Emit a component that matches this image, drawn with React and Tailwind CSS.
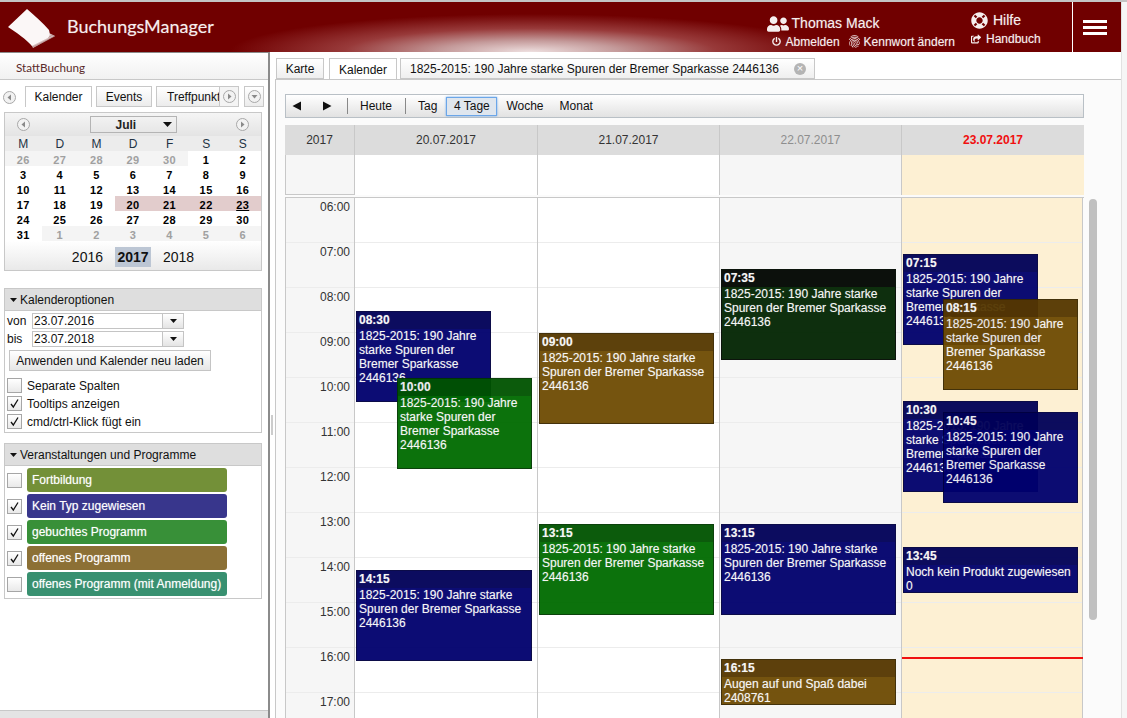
import React from 'react';
import { FaUserFriends, FaLifeRing, FaPowerOff, FaShareSquare } from 'react-icons/fa';
import { MdFingerprint } from 'react-icons/md';

const hours = ['06:00', '07:00', '08:00', '09:00', '10:00', '11:00', '12:00', '13:00', '14:00', '15:00', '16:00', '17:00'];

const calRows = [
    [[26, 1], [27, 1], [28, 1], [29, 1], [30, 1], [1], [2]],
    [[3], [4], [5], [6], [7], [8], [9]],
    [[10], [11], [12], [13], [14], [15], [16]],
    [[17], [18], [19], [20, 2], [21, 2], [22, 2], [23, 3]],
    [[24], [25], [26], [27], [28], [29], [30]],
    [[31], [1, 1], [2, 1], [3, 1], [4, 1], [5, 1], [6, 1]],
];

const SPAREN = '1825-2015: 190 Jahre starke Spuren der Bremer Sparkasse 2446136';

// events are slightly see-through, so the base colours are a bit darker than they look
const navy = { head: 'bg-[#000057]', body: 'bg-[#00006d]', border: 'border-[#000040]' };
const green = { head: 'bg-[#005300]', body: 'bg-[#006b00]', border: 'border-[#003800]' };
const brown = { head: 'bg-[#553700]', body: 'bg-[#6e4b03]', border: 'border-[#3a2800]' };
const dark = { head: 'bg-[#000400]', body: 'bg-[#022502]', border: 'border-[#000800]' };

const Arrow = ({ dir = 'left' }) => (
    <span className="flex h-[13px] w-[13px] items-center justify-center rounded-full border border-[#a8a8a8] bg-[#f2f2f2]">
        <svg width="7" height="7" viewBox="0 0 7 7">
            {dir === 'left' && <path d="M5 0.5V6.5L1.5 3.5Z" fill="#8a8a8a" />}
            {dir === 'right' && <path d="M2 0.5V6.5L5.5 3.5Z" fill="#8a8a8a" />}
            {dir === 'down' && <path d="M0.5 2H6.5L3.5 5.5Z" fill="#8a8a8a" />}
        </svg>
    </span>
);

const Caret = () => (
    <svg width="9" height="5" viewBox="0 0 9 5"><path d="M0 0H9L4.5 5Z" fill="#111" /></svg>
);

const SmallCaret = () => (
    <svg width="7" height="4" viewBox="0 0 7 4"><path d="M0 0H7L3.5 4Z" fill="#111" /></svg>
);

const Check = ({ checked }) => (
    <span className="flex h-[15px] w-[15px] shrink-0 items-center justify-center border border-[#a6a6a6] bg-gradient-to-b from-white to-[#e9e9e9]">
        {checked && (
            <svg width="11" height="11" viewBox="0 0 11 11">
                <path d="M2 6L4.3 9L9 1.5" fill="none" stroke="#111" strokeWidth="1.3" />
            </svg>
        )}
    </span>
);

const DateField = ({ label, value }) => (
    <div className="flex h-[16px] items-center">
        <span className="w-[27px] pl-[2px] text-[12px]">{label}</span>
        <div className="flex h-[16px] w-[152px] items-center border border-[#c4c4c4] bg-white">
            <span className="flex-1 pl-[1px] text-[12px] leading-none">{value}</span>
            <span className="flex h-full w-[21px] items-center justify-center border-l border-[#c4c4c4] bg-gradient-to-b from-white to-[#e4e4e4]">
                <SmallCaret />
            </span>
        </div>
    </div>
);

const Legend = ({ checked, color, label }) => (
    <div className="flex h-[24px] items-center">
        <div className="flex w-[22px] pl-[2px]"><Check checked={checked} /></div>
        <div className={`flex h-[24px] w-[200px] items-center whitespace-nowrap rounded-[3px] pl-[5px] text-[12px] text-white [text-shadow:0_0_1px_rgba(255,255,255,0.5)] ${color}`}>
            {label}
        </div>
    </div>
);

const SideTab = ({ active, children, className }) => (
    <div className={`flex h-[21px] items-center justify-center overflow-hidden border border-[#c8c8c8] text-[12px] ${active ? 'border-b-0 bg-white' : 'bg-gradient-to-b from-white to-[#ececec]'} ${className}`}>
        {children}
    </div>
);

const Sidebar = () => (
    <aside className="flex h-full w-[270px] shrink-0 flex-col border-r-2 border-t border-[#8b8b8b] bg-white">
        <div className="h-[27px] shrink-0 border-b border-[#c8c8c8] bg-gradient-to-b from-white to-[#f1f1f1] pl-[16px] pt-[7px] font-['Lato',sans-serif] text-[11.7px] leading-[14px] text-[#5b2a2a]">
            StattBuchung
        </div>
        <div className="flex h-[27px] shrink-0 items-end pl-[2px]">
            <div className="mb-[3px] flex w-[14px] justify-center"><Arrow /></div>
            <SideTab active className="ml-[9px] w-[67px]">Kalender</SideTab>
            <SideTab className="ml-[4px] w-[56px]">Events</SideTab>
            <SideTab className="ml-[4px] w-[83px] justify-start pl-[10px]"><span className="whitespace-nowrap">Treffpunkt</span></SideTab>
            <div className="ml-[-20px] flex h-[21px] w-[19px] items-center justify-center border-y border-l border-[#c8c8c8] bg-[#f4f4f4]"><Arrow dir="right" /></div>
            <div className="ml-[6px] flex h-[21px] w-[20px] items-center justify-center border border-[#c8c8c8] bg-gradient-to-b from-white to-[#ececec]"><Arrow dir="down" /></div>
        </div>

        <div className="mx-[4px] mt-[5px] w-[258px] border border-[#c8c8c8]">
            <div className="flex h-[23px] items-center justify-between bg-gradient-to-b from-[#f5f5f5] to-[#e4e4e4] px-[12px]">
                <Arrow />
                <div className="flex h-[17px] w-[87px] items-center gap-[27px] border border-[#b4b4b4] pl-[25px] text-[12px] font-bold text-[#222]">
                    Juli <Caret />
                </div>
                <Arrow dir="right" />
            </div>
            <div className="grid h-[15px] grid-cols-7 bg-[#ececec] text-center text-[12px] leading-[16px] text-[#234]">
                {['M', 'D', 'M', 'D', 'F', 'S', 'S'].map((d, i) => <span key={i}>{d}</span>)}
            </div>
            {calRows.map((row, r) => (
                <div key={r} className="grid h-[15px] grid-cols-7 text-center text-[11px] font-bold tracking-[0.4px]">
                    {row.map(([n, kind], i) => (
                        <span
                            key={i}
                            className={`h-[15px] pt-[3px] leading-[13px] ${
                                kind === 1 ? 'bg-[#f4f4f4] text-[#a0a0a0]'
                                : kind === 2 ? 'bg-[#e2cccc] text-black'
                                : kind === 3 ? 'bg-[#e2cccc] text-black underline'
                                : 'text-black'
                            }`}
                        >
                            {n}
                        </span>
                    ))}
                </div>
            ))}
            <div className="flex h-[29px] items-center justify-center bg-gradient-to-b from-white to-[#e9e9e9] pt-[3px] text-[14px]">
                <span>2016</span>
                <span className="mx-[12px] flex h-[20px] w-[36px] items-center justify-center bg-[#bcc6d4] pt-[1px] font-bold">2017</span>
                <span>2018</span>
            </div>
        </div>

        <div className="mx-[4px] mt-[17px] w-[258px] border border-[#c8c8c8]">
            <div className="flex h-[22px] items-center gap-[3px] border-b border-[#c8c8c8] bg-[#dedede] pl-[5px] text-[12px]">
                <SmallCaret />
                Kalenderoptionen
            </div>
            <div className="flex flex-col gap-[2px] pt-[2px]">
                <DateField label="von" value="23.07.2016" />
                <DateField label="bis" value="23.07.2018" />
            </div>
            <div className="ml-[4px] mt-[3px] flex h-[21px] w-[202px] items-center justify-center border border-[#c4c4c4] bg-gradient-to-b from-white to-[#e6e6e6] text-[12px]">
                Anwenden und Kalender neu laden
            </div>
            <div className="flex flex-col gap-[3px] pb-[3px] pl-[2px] pt-[7px] text-[12px]">
                <label className="flex h-[15px] items-center gap-[5px]"><Check />Separate Spalten</label>
                <label className="flex h-[15px] items-center gap-[5px]"><Check checked />Tooltips anzeigen</label>
                <label className="flex h-[15px] items-center gap-[5px]"><Check checked />cmd/ctrl-Klick fügt ein</label>
            </div>
        </div>

        <div className="mx-[4px] mt-[10px] w-[258px] border border-[#c8c8c8]">
            <div className="flex h-[22px] items-center gap-[3px] border-b border-[#c8c8c8] bg-[#dedede] pl-[5px] text-[12px]">
                <SmallCaret />
                Veranstaltungen und Programme
            </div>
            <div className="flex flex-col gap-[2px] py-[2px]">
                <Legend color="bg-[#739038]" label="Fortbildung" />
                <Legend checked color="bg-[#38368c]" label="Kein Typ zugewiesen" />
                <Legend checked color="bg-[#389038]" label="gebuchtes Programm" />
                <Legend checked color="bg-[#8c7035]" label="offenes Programm" />
                <Legend color="bg-[#389070]" label="offenes Programm (mit Anmeldung)" />
            </div>
        </div>

        <div className="flex-1" />
        <div className="h-[8px] shrink-0 border-t border-[#c8c8c8] bg-[#e4e4e4]" />
    </aside>
);

const Logo = () => (
    <svg width="50" height="42" viewBox="0 0 50 42">
        <path d="M43 27L49 30L27 42L25 38Z" fill="#d9c2c2" />
        <path d="M27 41L49 30M26 39.5L47 29" stroke="#a87a7a" strokeWidth="0.6" fill="none" />
        <path d="M2 21L21 3C29 10 37 17 43 24C44 27 44 30 42 32L26 40C20 33 11 27 2 21Z" fill="#fbf7f7" />
    </svg>
);

const Header = () => (
    <header className="flex h-[50px] shrink-0 bg-[#700000] bg-[radial-gradient(ellipse_300px_38px_at_530px_100%,#eee0e0,#c49a9a_30%,#983a3a_62%,#700000_100%)] text-[#f6eeee] [text-shadow:0_0_1px_rgba(255,255,255,0.4)]">
        <div className="flex w-[66px] items-center pl-[6px]">
            <Logo />
        </div>
        <div className="ml-[1px] pt-[12px] font-['Lato',sans-serif] text-[18px] leading-[24px]">BuchungsManager</div>
        <div className="flex-1" />
        <div className="mr-[16px] flex flex-col items-start pt-[12px]">
            <div className="flex h-[19px] items-center gap-[3px] text-[14px]">
                <FaUserFriends className="text-[22px]" /><span>Thomas Mack</span>
            </div>
            <div className="flex h-[17px] items-center pl-[5px] text-[12px]">
                <FaPowerOff className="mr-[5px] text-[9px]" />Abmelden
                <MdFingerprint className="ml-[7px] mr-[2px] text-[15px]" />Kennwort ändern
            </div>
        </div>
        <div className="flex w-[102px] flex-col items-start border-r border-white pt-[9px]">
            <div className="flex h-[19px] items-center gap-[5px] text-[14px]">
                <FaLifeRing className="text-[17px]" />Hilfe
            </div>
            <div className="flex h-[18px] items-center gap-[5px] text-[12px]">
                <FaShareSquare className="text-[10px]" />Handbuch
            </div>
        </div>
        <div className="flex w-[48px] flex-col justify-center gap-[3px] pl-[10px]">
            <span className="h-[3px] w-[24px] bg-white" />
            <span className="h-[3px] w-[24px] bg-white" />
            <span className="h-[3px] w-[24px] bg-white" />
        </div>
    </header>
);

const Event = ({ x, top, w, h, time, text, tone }) => (
    <div className={`absolute overflow-hidden border text-[12px] leading-[14px] text-[#f6f6f6] opacity-95 [text-shadow:0_0_1px_rgba(255,255,255,0.4)] ${tone.body} ${tone.border}`} style={{ left: x, top, width: w, height: h }}>
        <div className={`h-[17px] pl-[2px] pt-[1px] font-bold ${tone.head}`}>{time}</div>
        <div className="pl-[2px]">{text}</div>
    </div>
);

const ToolBtn = ({ children, className = '' }) => (
    <span className={`flex items-center text-[12px] ${className}`}>{children}</span>
);

const dayCols = [
    { w: 'w-[183px]', bg: 'bg-white' },
    { w: 'w-[182px]', bg: 'bg-white' },
    { w: 'w-[182px]', bg: 'bg-[#f6f6f6]' },
    { w: 'w-[181px]', bg: 'bg-[#fdf0d3]' },
];

const Main = () => (
    <main className="flex min-w-0 flex-1 flex-col">
        <div className="flex h-[27px] shrink-0 items-end pl-[1px] text-[12px]">
            <div className="flex h-[21px] w-[48px] items-center justify-center border border-[#c8c8c8] bg-gradient-to-b from-white to-[#efefef]">Karte</div>
            <div className="ml-[5px] flex h-[22px] w-[68px] translate-y-[1px] items-center justify-center border border-b-0 border-[#c8c8c8] bg-white">Kalender</div>
            <div className="ml-[3px] flex h-[21px] w-[415px] items-center border border-[#c8c8c8] bg-gradient-to-b from-white to-[#efefef] pl-[9px]">
                <span>{SPAREN}</span>
                <span className="ml-[15px] flex h-[12px] w-[12px] items-center justify-center rounded-full bg-[#b4b4b4] text-[11px] leading-none text-white">×</span>
            </div>
        </div>
        <div className="relative flex min-h-0 flex-1 flex-col overflow-hidden border-l border-t border-[#c8c8c8] bg-[#fbfbfb] pl-[9px] pt-[14px]">
            <div className="flex h-[24px] w-[799px] shrink-0 items-center border border-[#b9c0c6] bg-gradient-to-b from-white to-[#e2e2e2] pl-[6px]">
                <svg width="10" height="10" viewBox="0 0 10 10"><path d="M9 0.5V9.5L0.5 5Z" fill="#111" /></svg>
                <svg className="ml-[20px]" width="10" height="10" viewBox="0 0 10 10"><path d="M1 0.5V9.5L9.5 5Z" fill="#111" /></svg>
                <span className="ml-[15px] h-[16px] w-px bg-[#888]" />
                <ToolBtn className="ml-[12px]">Heute</ToolBtn>
                <span className="ml-[13px] h-[16px] w-px bg-[#888]" />
                <ToolBtn className="ml-[12px]">Tag</ToolBtn>
                <ToolBtn className="ml-[9px] h-[19px] w-[51px] justify-center border border-[#6ba6e8] bg-[#dfe6ee] shadow-[0_0_2px_#6ba6e8]">4 Tage</ToolBtn>
                <ToolBtn className="ml-[9px]">Woche</ToolBtn>
                <ToolBtn className="ml-[16px]">Monat</ToolBtn>
            </div>

            <div className="mt-[7px] w-[799px] shrink-0">
                <div className="flex h-[30px] bg-[#dcdcdc] text-center text-[12px] leading-[30px] text-[#333]">
                    <div className="w-[70px] border-r border-[#c8c8c8]">2017</div>
                    <div className="w-[183px] border-r border-[#c8c8c8]">20.07.2017</div>
                    <div className="w-[182px] border-r border-[#c8c8c8]">21.07.2017</div>
                    <div className="w-[182px] border-r border-[#c8c8c8] text-[#8e8e8e]">22.07.2017</div>
                    <div className="w-[182px] font-bold text-[#f01010]">23.07.2017</div>
                </div>
                <div className="flex h-[40px]">
                    <div className="w-[70px] border-b border-l border-r border-[#c8c8c8] bg-[#f6f6f6]" />
                    <div className="w-[183px] border-r border-[#c8c8c8] bg-white" />
                    <div className="w-[182px] border-r border-[#c8c8c8] bg-white" />
                    <div className="w-[182px] border-r border-[#c8c8c8] bg-[#f6f6f6]" />
                    <div className="w-[182px] bg-[#fdf0d3]" />
                </div>
            </div>

            <div className="mt-[2px] flex min-h-0 flex-1 overflow-hidden">
                <div className="flex w-[799px] shrink-0 border-l border-t border-[#c8c8c8]">
                    <div className="w-[69px] shrink-0 border-r border-[#c8c8c8] bg-[#f6f6f6] text-right text-[12px] text-[#333]">
                        {hours.map((h) => (
                            <div key={h} className="h-[45px] border-b border-[#ececec] pr-[4px] pt-[2px] leading-[14px]">{h}</div>
                        ))}
                    </div>
                    <div className="relative flex flex-1">
                        {dayCols.map((col, i) => (
                            <div key={i} className={`shrink-0 border-r border-[#c8c8c8] ${col.w} ${col.bg}`}>
                                {hours.map((h) => <div key={h} className="h-[45px] border-b border-[#ececec]" />)}
                            </div>
                        ))}
                        <Event x={1} top={113} w={135} h={91} time="08:30" text={SPAREN} tone={navy} />
                        <Event x={42} top={180} w={135} h={91} time="10:00" text={SPAREN} tone={green} />
                        <Event x={1} top={372} w={176} h={91} time="14:15" text={SPAREN} tone={navy} />
                        <Event x={184} top={135} w={175} h={91} time="09:00" text={SPAREN} tone={brown} />
                        <Event x={184} top={326} w={175} h={91} time="13:15" text={SPAREN} tone={green} />
                        <Event x={366} top={71} w={175} h={91} time="07:35" text={SPAREN} tone={dark} />
                        <Event x={366} top={326} w={175} h={91} time="13:15" text={SPAREN} tone={navy} />
                        <Event x={366} top={461} w={175} h={46} time="16:15" text="Augen auf und Spaß dabei 2408761" tone={brown} />
                        <Event x={548} top={56} w={135} h={91} time="07:15" text={SPAREN} tone={navy} />
                        <Event x={588} top={101} w={135} h={91} time="08:15" text={SPAREN} tone={brown} />
                        <Event x={548} top={203} w={135} h={91} time="10:30" text={SPAREN} tone={navy} />
                        <Event x={588} top={214} w={135} h={91} time="10:45" text={SPAREN} tone={navy} />
                        <Event x={548} top={349} w={175} h={46} time="13:45" text="Noch kein Produkt zugewiesen 0" tone={navy} />
                        <div className="absolute left-[547px] top-[459px] h-[2px] w-[181px] bg-[#f01010]" />
                    </div>
                </div>
                <div className="ml-[5px] w-[8px] pt-[2px]">
                    <div className="h-[421px] w-[8px] rounded-[4px] bg-[#c0c0c0]" />
                </div>
            </div>
        </div>
    </main>
);

export default function App() {
    return (
        <div className="flex h-[718px] w-[1127px] flex-col overflow-hidden bg-white font-['Liberation_Sans',Arial,sans-serif] text-[#111]">
            <div className="h-[2px] shrink-0 bg-[#c4c4c4]" />
            <div className="flex min-h-0 flex-1">
                <div className="flex w-[1121px] shrink-0 flex-col">
                    <Header />
                    <div className="flex min-h-0 flex-1">
                        <Sidebar />
                        <div className="w-[5px] shrink-0 pl-[1px] pt-[363px]">
                            <div className="h-[20px] w-[2px] bg-[#cccccc]" />
                        </div>
                        <Main />
                    </div>
                </div>
                <div className="flex-1 border-l border-[#e2e2e2] bg-[#f6f6f6]" />
            </div>
        </div>
    );
}
